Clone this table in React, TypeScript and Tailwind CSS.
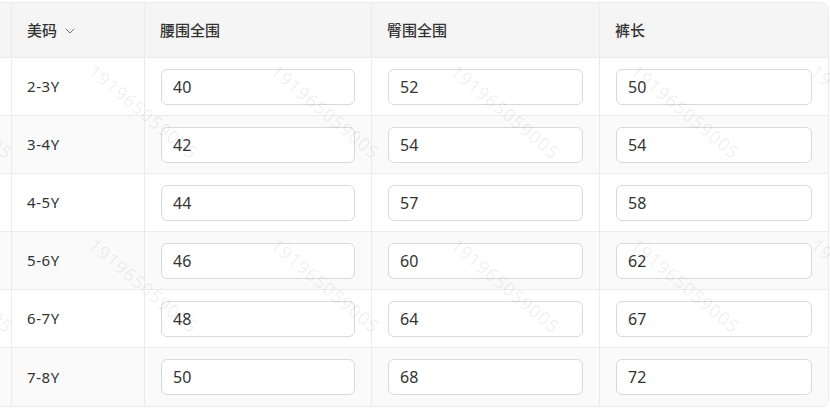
import React from 'react';
import { ChevronDown } from 'lucide-react';

interface SizeRow {
  size: string;
  waist: string;
  hip: string;
  length: string;
}

const rows: SizeRow[] = [
  { size: '2-3Y', waist: '40', hip: '52', length: '50' },
  { size: '3-4Y', waist: '42', hip: '54', length: '54' },
  { size: '4-5Y', waist: '44', hip: '57', length: '58' },
  { size: '5-6Y', waist: '46', hip: '60', length: '62' },
  { size: '6-7Y', waist: '48', hip: '64', length: '67' },
  { size: '7-8Y', waist: '50', hip: '68', length: '72' },
];

const fontStack = '"Noto Sans", "Noto Sans CJK SC", sans-serif';

// watermark anchors (left/top of the rotated text)
const marks: [number, number][] = [];
for (const y of [58, 232, 406]) {
  for (const x of [-85, 100, 282, 462, 642, 822]) marks.push([x, y]);
}

const Cell: React.FC<{ value: string }> = ({ value }) => (
  <div className="flex items-center px-4 border-l border-[#ebebeb]">
    <input
      defaultValue={value}
      className="w-full h-9 rounded-md border border-[#d9d9d9] bg-white px-[11px] text-[16px] text-[#333] outline-none"
    />
  </div>
);

export default function App() {
  return (
    <div className="relative w-[830px] h-[412px] bg-white overflow-hidden" style={{ fontFamily: fontStack }}>
      <div className="mt-[2px] w-[829px] border-t border-r border-b border-[#ebebeb] rounded-tr-lg rounded-br-lg overflow-hidden">
        {/* header */}
        <div className="grid grid-cols-[11px_133px_227px_228px_1fr] h-[55px] bg-[#f5f5f5] border-b border-[#ebebeb] text-[15px] font-medium text-[#333]">
          <div />
          <div className="flex items-center gap-[5px] pl-[15px] border-l border-[#ebebeb]">
            <span>美码</span>
            <ChevronDown size={16} strokeWidth={1.25} className="text-[#555] mt-[1px]" />
          </div>
          <div className="flex items-center pl-[15px] border-l border-[#ebebeb]">腰围全围</div>
          <div className="flex items-center pl-[15px] border-l border-[#ebebeb]">臀围全围</div>
          <div className="flex items-center pl-[15px] border-l border-[#ebebeb]">裤长</div>
        </div>

        {rows.map((r, i) => (
          <div
            key={r.size}
            className={`grid grid-cols-[11px_133px_227px_228px_1fr] h-[58px] ${i < rows.length - 1 ? 'border-b border-[#ebebeb]' : ''} ${i % 2 === 1 ? 'bg-[#fafafa]' : 'bg-white'}`}
          >
            <div />
            <div className="flex items-center pl-[15px] border-l border-[#ebebeb] text-[15px] tracking-[0.6px] text-[#333]">{r.size}</div>
            <Cell value={r.waist} />
            <Cell value={r.hip} />
            <Cell value={r.length} />
          </div>
        ))}
      </div>

      {/* watermark overlay */}
      <div className="absolute inset-0 pointer-events-none">
        {marks.map(([x, y]) => (
          <span
            key={`${x}-${y}`}
            className="absolute origin-top-left rotate-[40deg] text-[18px] tracking-[1px] text-black/[0.08] whitespace-nowrap"
            style={{ left: x, top: y, fontFamily: '"Open Sans", sans-serif' }}
          >
            191965059005
          </span>
        ))}
      </div>
    </div>
  );
}
